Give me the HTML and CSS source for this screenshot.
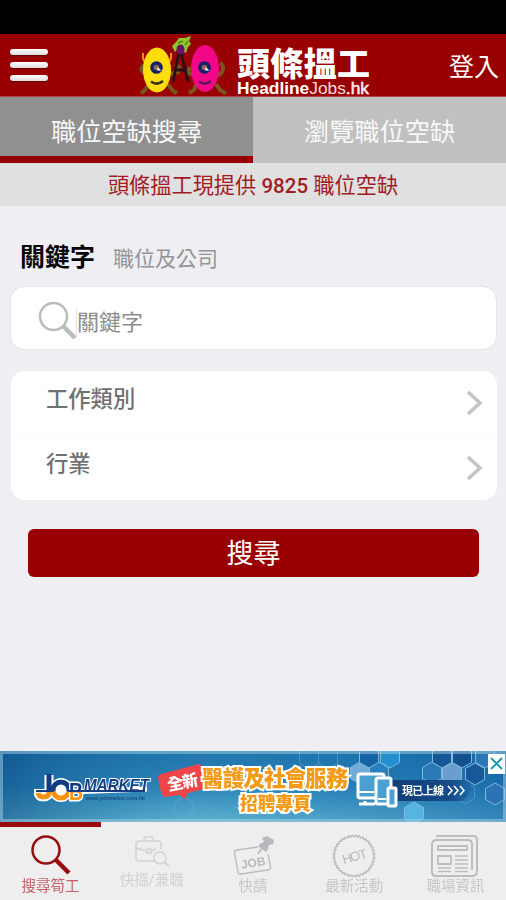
FILE: index.html
```html
<!DOCTYPE html>
<html lang="zh-Hant">
<head>
<meta charset="utf-8">
<title>頭條搵工</title>
<link rel="stylesheet" href="styles.css">
</head>
<body>
<div class="status"></div>
<header class="header">
  <div class="menu"><i></i><i></i><i></i></div>
  <div class="brand">
    <svg class="mascots" width="92" height="62" viewBox="0 0 92 62">
      <g fill="none" stroke="#79571b" stroke-width="4">
        <path d="M8 30Q2 33 4 37L10 42M11 50L7 56L3 59.500M30 50L34 56L39 59.500M32 40L40 38L41 33L37 30"/>
        <path d="M58 42L50 39L52 33M59 50L56 56L51 59.500M82 29Q87 32 84 38L80 42M78 50L82 56L88 59.500"/>
      </g>
      <path d="M41 18L35 48M43 18L50 48M37 36H47" stroke="#261018" stroke-width="2.800" fill="none"/>
      <path d="M5 19Q4 27 9 30M33 19Q34 27 29 30" fill="none" stroke="#ed941e" stroke-width="2"/>
      <ellipse cx="19" cy="36" rx="14" ry="22.500" fill="#ffdc0c"/>
      <ellipse cx="67" cy="34.500" rx="14" ry="23.500" fill="#f20786"/>
      <path d="M37 18L34 12L38 8L41 4L47 4L53 2L51 7L53 10L50 13L48 19L45 17L40 15Z" fill="#8dc72b"/>
      <path d="M40 9L45 7M47 11L50 7" fill="none" stroke="#416d12" stroke-width="1.200"/>
      <ellipse cx="42.500" cy="15.500" rx="4" ry="5" fill="#651466"/>
      <circle cx="18.500" cy="33.500" r="6.300" fill="#16206e"/><circle cx="66.500" cy="33.500" r="6.300" fill="#16206e"/>
      <circle cx="18.500" cy="33.500" r="2.800" fill="#8e654f"/><circle cx="66.500" cy="33.500" r="2.800" fill="#8e654f"/>
      <path d="M19 33l4.500 3.500-4 0zM67 33l4.500 3.500-4 0z" fill="#fff"/>
      <path d="M13 47.500Q19 52 25 47" fill="none" stroke="#37301f" stroke-width="2.500"/>
      <path d="M61 47.500Q67 52 73 47" fill="none" stroke="#66105e" stroke-width="2.500"/>
    </svg>
    <svg class="wordmark" width="136" height="62" viewBox="0 0 136 62">
      <text class="wm-zh" x="2" y="41.500" textLength="133">頭條搵工</text>
      <text class="wm-en" x="2" y="59.500" textLength="132" lengthAdjust="spacingAndGlyphs"><tspan class="wm-b">Headline</tspan>Jobs<tspan class="wm-m">.hk</tspan></text>
    </svg>
  </div>
  <div class="login">登入</div>
</header>
<nav class="tabs">
  <div class="tab active">職位空缺搜尋</div>
  <div class="tab">瀏覽職位空缺</div>
</nav>
<div class="notice">頭條搵工現提供 <span class="count">9825</span> 職位空缺</div>
<main class="main">
  <div class="label"><b>關鍵字</b><span>職位及公司</span></div>
  <div class="search">
    <svg width="40" height="40" viewBox="0 0 40 40" fill="none" stroke="#babdbd"><circle cx="15.500" cy="15.500" r="13.500" stroke-width="2.500"/><path d="M25 25L37 37" stroke-width="4.500"/></svg>
    <span class="placeholder">關鍵字</span>
  </div>
  <div class="list">
    <div class="row"><span>工作類別</span><svg width="18" height="28" viewBox="0 0 18 28"><path d="M2 3L14 14L2 25"/></svg></div>
    <div class="row"><span>行業</span><svg width="18" height="28" viewBox="0 0 18 28"><path d="M2 3L14 14L2 25"/></svg></div>
  </div>
  <div class="submit">搜尋</div>
</main>
<aside class="ad">
  <svg width="506" height="71" viewBox="0 0 506 71">
    <defs>
      <linearGradient id="sky" x1="0" y1="0" x2="0" y2="1"><stop offset="0" stop-color="#2273ab"/><stop offset=".5" stop-color="#2f86b9"/><stop offset="1" stop-color="#66b7d2"/></linearGradient>
      <linearGradient id="deep" x1="0" y1="0" x2="1" y2="0"><stop offset="0" stop-color="#06457d" stop-opacity=".55"/><stop offset=".4" stop-color="#1582b5" stop-opacity=".1"/><stop offset="1" stop-color="#0757a0" stop-opacity=".5"/></linearGradient>
      <linearGradient id="pill" x1="0" y1="0" x2="1" y2="0"><stop offset="0" stop-color="#123c77"/><stop offset=".75" stop-color="#164c88"/><stop offset="1" stop-color="#1c6aa8"/></linearGradient>
      <linearGradient id="job" gradientUnits="userSpaceOnUse" x1="0" y1="28" x2="0" y2="54"><stop offset=".45" stop-color="#123b82"/><stop offset=".45" stop-color="#f39213"/></linearGradient>
      <path id="hex" d="M0 -11L9.500 -5.500V5.500L0 11L-9.500 5.500V-5.500Z"/>
    </defs>
    <rect width="506" height="71" fill="url(#sky)"/><rect width="506" height="71" fill="url(#deep)"/>
    <g stroke="#7ebbe0" stroke-width="1" fill="#3386c3">
      <use href="#hex" x="360" y="22" fill="#70acd6"/><use href="#hex" x="379" y="22" fill="#2781bd"/><use href="#hex" x="390" y="6" fill="#228fd0"/><use href="#hex" x="369" y="6" fill="#1563a4"/>
      <use href="#hex" x="432" y="22" fill="#2b78b7"/><use href="#hex" x="442" y="6" fill="#155696"/><use href="#hex" x="452" y="23" fill="#6b9ecf"/><use href="#hex" x="462" y="6" fill="#13508e"/><use href="#hex" x="475" y="23" fill="#16589a"/><use href="#hex" x="485" y="6" fill="#2c77b6"/><use href="#hex" x="495" y="43" fill="#2d73b3"/><use href="#hex" x="414" y="62" fill="#55b5e0"/>
    </g>
    <g fill="none" stroke="#69b4d5" opacity=".5"><use href="#hex" x="309" y="7"/><use href="#hex" x="328" y="7"/><use href="#hex" x="184" y="57"/><use href="#hex" x="465" y="42"/></g>
    <rect x="1.500" y="1.500" width="503" height="68" fill="none" stroke="#a7d2e5" stroke-width="3" opacity=".5"/>
    <path d="M34 40.500H84L147 38" stroke="#fff" stroke-width="5" fill="none"/>
    <g stroke-linejoin="round" fill="none">
      <path d="M49 24V41Q49 46 43 46Q39 46 38 42" stroke="#fff" stroke-width="9"/>
      <circle cx="61" cy="39" r="8" stroke="#fff" stroke-width="8"/>
      <path d="M49 23V41Q49 46 43 46Q39 46 38 42" stroke="url(#job)" stroke-width="5"/>
      <circle cx="61" cy="39" r="8" fill="#fff" stroke="url(#job)" stroke-width="5"/>
    </g>
    <text class="ad-job" x="69" y="49" textLength="14" lengthAdjust="spacingAndGlyphs" fill="url(#job)">B</text>
    <text class="ad-market" x="84" y="40" textLength="65" lengthAdjust="spacingAndGlyphs">MARKET</text>
    <path d="M36 40H54M68 40H145" stroke="#173e82" stroke-width="2"/>
    <text class="ad-url" x="86" y="49" textLength="59" lengthAdjust="spacingAndGlyphs">www.jobmarket.com.hk</text>
    <path d="M161 23L199 13Q203 12 204 38L188 42L185 48L179 44L165 46Q161 46 158 27Q158 24 161 23Z" fill="#ee4548"/>
    <text class="ad-new" x="167" y="37" textLength="31" transform="rotate(-11 182 31)">全新</text>
    <text class="ad-main" x="202" y="34.500" textLength="146">醫護及社會服務</text>
    <text class="ad-sub" x="240" y="58.500" textLength="71">招聘專頁</text>
    <path d="M389 29H464Q476 32 468 44Q465 50 460 50H388Z" fill="url(#pill)"/>
    <g fill="#4aa0d0" stroke="#fff" stroke-width="3"><rect x="358" y="23" width="26" height="24" rx="2"/><path d="M365 50V53M359 53H375"/><rect x="376" y="27" width="15" height="26" rx="2"/><rect x="388" y="37" width="8" height="18" rx="1"/></g>
    <path d="M359 41H374M378 48H386" stroke="#fff" stroke-width="2"/>
    <text class="ad-live" x="402" y="43.500" textLength="42">現已上線</text>
    <path d="M448 35l4 4.500-4 4.500M454 35l4 4.500-4 4.500M460 35l4 4.500-4 4.500" fill="none" stroke="#fff" stroke-width="1.600"/>
    <rect x="488" y="3" width="17" height="20" fill="#fff"/><path d="M491 7L502 18M502 7L491 18" stroke="#159ab6" stroke-width="1.800"/>
  </svg>
</aside>
<nav class="bottom">
  <div class="item on">
    <svg width="46" height="46" viewBox="0 0 46 46"><circle cx="18" cy="17" r="13.500" stroke-width="2.500"/><path d="M28 27L41 40" stroke-width="4.500"/></svg>
    <span>搜尋筍工</span>
  </div>
  <div class="item second">
    <svg width="46" height="46" viewBox="0 0 46 46"><path d="M27 34H10Q7 34 7 31V17Q7 14 10 14H29Q32 14 32 17V22M15 14V12Q15 10 17 10H22Q24 10 24 12V14M7 21L17 24M22 24L27 22M18 22H22V26H18Z"/><circle cx="31" cy="31" r="6"/><path d="M35 35L40 39" stroke-width="2"/></svg>
    <span>快搵/兼職</span>
  </div>
  <div class="item">
    <svg width="46" height="46" viewBox="0 0 46 46"><path d="M28 14L7 17Q4 17.500 4.500 20L8 39Q8.500 42 11 41L38 37Q41 36.500 40.500 34L38 21"/><path class="solid" d="M32 5L37 3L40 5L44 7L43 11L39 12L38 16L36 19L28 13L31 10L34 9Z"/><path d="M32 15L28 21" stroke-width="2"/><text class="job" x="11" y="34" transform="rotate(-9 23 30)">JOB</text></svg>
    <span>快請</span>
  </div>
  <div class="item">
    <svg width="46" height="46" viewBox="0 0 46 46">
      <defs><g id="star"><rect id="sq" x="9" y="9" width="28" height="28"/><use href="#sq" transform="rotate(10 23 23)"/><use href="#sq" transform="rotate(20 23 23)"/><use href="#sq" transform="rotate(30 23 23)"/><use href="#sq" transform="rotate(40 23 23)"/><use href="#sq" transform="rotate(50 23 23)"/><use href="#sq" transform="rotate(60 23 23)"/><use href="#sq" transform="rotate(70 23 23)"/><use href="#sq" transform="rotate(80 23 23)"/></g></defs>
      <use href="#star" stroke-width="3"/><use class="inside" href="#star"/><circle class="inside" cx="23" cy="23" r="17"/>
      <text class="hot" x="11" y="28" textLength="25" transform="rotate(-15 23 23)">HOT</text>
    </svg>
    <span>最新活動</span>
  </div>
  <div class="item">
    <svg width="50" height="46" viewBox="0 0 50 46"><path d="M6 3H43Q47 3 47 7V38Q47 43 42 43H6Q2 43 2 39V12Q2 7 6 7H38Q42 7 42 11V37" stroke-width="2"/><path d="M8 13H37V17H8ZM8 23H21V31H8Z" stroke-width="1.800"/><path d="M25 23H38M25 27H38M25 31H38M8 35H21M8 38.500H21M25 35H38M25 38.500H38" stroke-width="1.300"/></svg>
    <span>職場資訊</span>
  </div>
</nav>
</body>
</html>
```

FILE: styles.css
```css
* { box-sizing: border-box; }
body {
  margin: 0;
  width: 506px;
  height: 900px;
  display: flex;
  flex-direction: column;
  overflow: hidden;
  background: #eeeef3;
  font-family: Roboto, "Noto Sans CJK TC", sans-serif;
}
svg { display: block; flex: none; }
.status { height: 34px; background: #000; }
.header {
  height: 62px;
  display: flex;
  align-items: center;
  justify-content: space-between;
  padding: 0 7px 0 10px;
  background: #990002;
}
.menu { width: 128px; display: flex; flex-direction: column; gap: 6.5px; }
.menu i { width: 38px; height: 6.5px; border-radius: 3px; background: linear-gradient(#fff, #ddd); box-shadow: 0 1px 1px #650000; }
.brand { display: flex; flex: 1; }
.mascots { margin-right: 5px; }
.wm-zh { font: 900 33px "Noto Sans CJK TC", sans-serif; fill: #fff; }
.wm-en { font: 16px "Liberation Sans", sans-serif; fill: #f3dede; }
.wm-b { font-weight: 700; fill: #fff; }
.wm-m { stroke: #fff; stroke-width: .5px; }
.login { font-size: 25px; line-height: 36px; color: #fff; margin-top: 5px; }
.tabs { height: 67px; display: flex; border-top: 1px solid #b64043; }
.tab {
  flex: 1;
  display: flex;
  justify-content: center;
  background: #c0c0c0;
  color: #f8f8f8;
  font-size: 25.2px;
  line-height: 71px;
}
.tab.active { background: #909090; border-bottom: 7px solid #940002; }
.notice {
  height: 43px;
  background: #e0e0e0;
  color: #a01c23;
  text-align: center;
  font-size: 21.2px;
  line-height: 45px;
  white-space: nowrap;
}
.count { font-size: 20.5px; font-weight: 500; }
.main { flex: 1; padding: 33px 9px 0 10px; }
.label { height: 36px; display: flex; align-items: center; gap: 18px; padding-left: 10px; }
.label b { font-size: 25px; line-height: 36px; font-weight: 700; color: #080808; margin-top: 2px; }
.label span { font-size: 21px; line-height: 36px; color: #949496; margin-top: 3px; }
.search {
  height: 64px;
  margin-top: 11px;
  padding-left: 27px;
  display: flex;
  align-items: center;
  background: #fff;
  border: 1px solid #e5e5e9;
  border-radius: 14px;
}
.search svg { margin-top: 6px; }
.placeholder { border-left: 1px solid #e5e5e5; font-size: 22px; line-height: 30px; color: #8c8c8c; margin: 10px 0 0 -2px; }
.list { margin: 21px 0 0 1px; height: 129px; background: #fff; border-radius: 14px; }
.row { height: 64.5px; display: flex; align-items: center; justify-content: space-between; padding: 0 13px 0 35px; }
.row + .row { border-top: 1px solid #fafafa; }
.row span { font-size: 22.3px; line-height: 32px; font-weight: 500; color: #707070; margin-top: -8px; }
.row svg { fill: none; stroke: #c4c4c4; stroke-width: 3.5px; }
.submit {
  margin: 29px 18px 0;
  height: 48px;
  border-radius: 6px;
  background: #990002;
  color: #fff;
  text-align: center;
  font-size: 27px;
  line-height: 51px;
}
.ad { height: 71px; }
.ad text { font-family: "Noto Sans CJK TC", sans-serif; font-weight: 900; paint-order: stroke; }
.ad .ad-job { font: 900 23px "Liberation Sans", sans-serif; stroke: #fff; stroke-width: 3px; }
.ad .ad-market { font: italic 900 17px "Liberation Sans", sans-serif; fill: #173e82; stroke: #fff; stroke-width: 2px; }
.ad .ad-url { font: 700 5px "Liberation Sans", sans-serif; fill: #184f82; }
.ad .ad-new { font-size: 16px; fill: #fff; }
.ad .ad-main { font-size: 22px; fill: #f39a18; stroke: #fff; stroke-width: 4px; }
.ad .ad-sub { font-size: 18px; fill: #f39a18; stroke: #fff; stroke-width: 4px; }
.ad .ad-live { font-size: 11px; font-weight: 700; fill: #fff; }
.bottom { height: 78px; display: grid; grid-template-columns: repeat(5, 1fr); background: #eee; }
.item {
  display: flex;
  flex-direction: column;
  align-items: center;
  padding-top: 6px;
  border-top: 5px solid transparent;
  color: #c4c7c9;
}
.item svg { fill: none; stroke: #babec0; stroke-width: 1.4px; }
.item span { font-size: 14.5px; line-height: 20px; margin-top: -2px; white-space: nowrap; }
.item.on { border-top-color: #980b10; color: #c36168; }
.item.on svg { stroke: #980b10; }
.item.second { padding-top: 0; color: #d0d2d4; }
.item.second svg { stroke: #cfd2d4; }
.item .solid { fill: #b5b9bb; stroke: none; }
.item .inside { fill: #eee; stroke: none; }
.item text { fill: #b6babc; stroke: none; font-family: "Liberation Sans", sans-serif; }
.item .job { font-size: 12px; font-weight: 700; }
.item .hot { font-size: 13px; }
```
